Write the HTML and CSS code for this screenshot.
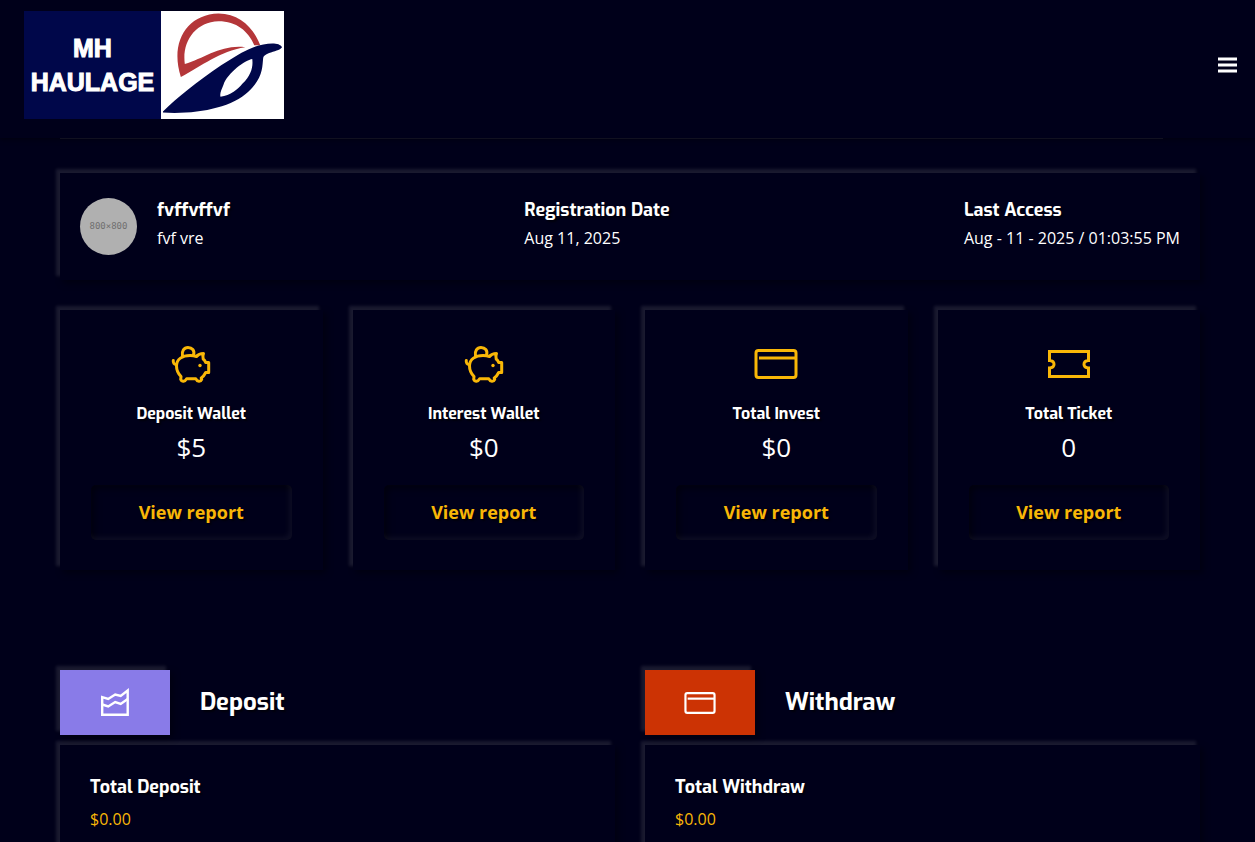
FILE: index.html
```html
<!DOCTYPE html>
<html lang="en">
	<head>
		<meta charset="UTF-8" />
		<meta name="viewport" content="width=device-width, initial-scale=1.0" />
		<title>MH Haulage - Dashboard</title>

		<link rel="stylesheet" href="styles.css">
	</head>

	<body>
		<!-- shared icons -->
		<svg class="sprite" aria-hidden="true">
			<symbol id="piggy" viewBox="-2 -1 44 40">
				<g fill="none" stroke="currentColor" stroke-width="3" stroke-linejoin="round" stroke-linecap="round">
					<path d="M2.300 15.500c-.4 2.500.8 3.800 3 4" />
					<path d="M5.500 21C5.500 14 11.500 10.500 19 10.500c2.500 0 4.500.3 6.500 1 1.500-2 4-3 7-3-.8 2-.8 4-.3 5.500 1.300 1 2 2 2.500 3.500h3v10h-3c-1 2-2 4-4.500 5.500l.5 1.500c-1 2.500-4.500 2.500-6-.8h-9c-1.500 3-5 3.300-6 .8l.3-3C7.500 29 5.500 25 5.500 21z" />
					<path d="M11.500 11C10.500 6 13 2.500 17 2.500S24 5.500 22.500 10" />
				</g>
				<circle cx="29" cy="20.500" r="1.700" fill="currentColor" />
			</symbol>
			<symbol id="card" viewBox="0 0 44 32">
				<g fill="none" stroke="currentColor" stroke-width="3">
					<rect x="2" y="2.500" width="40" height="27" rx="2.500" />
					<path d="M5 10h37" />
				</g>
			</symbol>
			<symbol id="ticket" viewBox="0 0 44 32">
				<path d="M2.500 3.500h39v9c-6 .5-6 7 0 7.500v8.500h-39V20c6-.5 6-7 0-7.500z" fill="none" stroke="currentColor" stroke-width="3" />
			</symbol>
			<symbol id="chart" viewBox="0 0 30 30">
				<g fill="none" stroke="currentColor" stroke-width="2.400">
					<path d="M2.200 9.200l6 1.800 7-4.500 5.500 1.500 7-5.500v24.300H2.200z" />
					<path d="M2.200 16.500l6 2 7-4.500 5.500 2 7-5" />
				</g>
			</symbol>
		</svg>

		<header class="header">
			<a href="#" class="logo">
				<span class="logo-text">MH<br />HAULAGE</span>
				<svg class="logo-mark" viewBox="0 0 124 108" aria-hidden="true">
					<path fill="#b43639" d="M20 66C9 32 25 3 58 2c21 0 35 14 42 32h-6C88 20 76 10 58 10 34 11 21 31 24 53c20-6 37-20 61-17-26 4-44 19-65 30z" />
					<path fill="#00074a" fill-rule="evenodd" d="M2 101C16 87 36 71 61 54c14-9 22-14 30-17 12-5 28-7 31-1-2 3-8 4-13 6-4 2-6 3-6 5-1 9 0 20-15 34-17 16-51 23-86 21zM92 48c-7 1-25 14-29 26-2 5-4 9-3 12 10-1 18-8 22-13 9-9 11-17 10-25z" />
				</svg>
			</a>
			<button type="button" class="menu-btn" aria-label="Menu">
				<svg viewBox="0 0 19 16" aria-hidden="true"><path d="M0 2h19M0 8h19M0 14h19" stroke="currentColor" stroke-width="3" /></svg>
			</button>
		</header>

		<main class="content">
			<section class="panel profile">
				<div class="user">
					<span class="avatar">800×800</span>
					<div>
						<h5>fvffvffvf</h5>
						<p>fvf vre</p>
					</div>
				</div>
				<div>
					<h5>Registration Date</h5>
					<p>Aug 11, 2025</p>
				</div>
				<div>
					<h5>Last Access</h5>
					<p>Aug - 11 - 2025 / 01:03:55 PM</p>
				</div>
			</section>

			<section class="stats">
				<div class="panel stat">
					<svg class="stat-icon"><use href="#piggy" /></svg>
					<h6>Deposit Wallet</h6>
					<p class="amount">$5</p>
					<a href="#" class="btn">View report</a>
				</div>
				<div class="panel stat">
					<svg class="stat-icon"><use href="#piggy" /></svg>
					<h6>Interest Wallet</h6>
					<p class="amount">$0</p>
					<a href="#" class="btn">View report</a>
				</div>
				<div class="panel stat">
					<svg class="stat-icon"><use href="#card" /></svg>
					<h6>Total Invest</h6>
					<p class="amount">$0</p>
					<a href="#" class="btn">View report</a>
				</div>
				<div class="panel stat">
					<svg class="stat-icon"><use href="#ticket" /></svg>
					<h6>Total Ticket</h6>
					<p class="amount">0</p>
					<a href="#" class="btn">View report</a>
				</div>
			</section>

			<section class="reports">
				<div>
					<div class="report-head">
						<span class="panel tile tile-deposit"><svg class="tile-icon"><use href="#chart" /></svg></span>
						<h3>Deposit</h3>
					</div>
					<div class="panel report-body">
						<h5>Total Deposit</h5>
						<p>$0.00</p>
					</div>
				</div>
				<div>
					<div class="report-head">
						<span class="panel tile tile-withdraw"><svg class="tile-icon"><use href="#card" /></svg></span>
						<h3>Withdraw</h3>
					</div>
					<div class="panel report-body">
						<h5>Total Withdraw</h5>
						<p>$0.00</p>
					</div>
				</div>
			</section>
		</main>
	</body>
</html>
```
FILE: styles.css
```css
* {
	box-sizing: border-box;
}

body {
	background-color: #00001a;
	color: #fff;
	font-family: "Open Sans", sans-serif;
	font-size: 16px;
	line-height: 26px;
	margin: 0;
	overflow-x: hidden;
	scrollbar-width: none;
}

h3,
h5,
h6,
p {
	margin: 0;
}

h3,
h5,
h6 {
	font-family: "Exo", "Exo 2", Roboto, sans-serif;
	font-weight: 700;
	text-shadow: 2px 2px 2px rgba(0, 0, 0, 0.6);
}

h3 {
	font-size: 24px;
	line-height: 32px;
	margin-bottom: 2px;
}

h5 {
	font-size: 18px;
	line-height: 24px;
}

h6 {
	font-size: 16px;
	line-height: 20px;
}

a {
	text-decoration: none;
}

.sprite {
	display: none;
}

/* header */
.header {
	align-items: center;
	box-shadow: 0 1px 5px rgba(0, 0, 0, 0.5);
	display: flex;
	justify-content: space-between;
	padding: 11px 18px 19px 24px;
}

.logo {
	background-color: #00074a;
	color: #fff;
	display: flex;
}

.logo-text {
	align-self: center;
	font: 900 25px/34px "Liberation Sans", sans-serif;
	-webkit-text-stroke: 1px #fff;
	text-align: center;
	width: 137px;
}

.logo-mark {
	background-color: #fff;
	height: 108px;
	width: 123px;
}

.menu-btn {
	background: none;
	border: 0;
	color: #fff;
	padding: 0;
}

.menu-btn svg {
	display: block;
	height: 16px;
	width: 19px;
}

/* dashboard */
.content {
	padding: 0 55px 0 60px;
}

.content::before {
	background-color: #111120;
	content: "";
	display: block;
	height: 1px;
	margin-right: 37px;
}

.panel {
	background-color: #00001a;
	box-shadow: -4px -4px 3px rgba(255, 255, 255, 0.1), 3px 3px 7px rgba(0, 0, 0, 0.4);
}

.profile {
	display: flex;
	justify-content: space-between;
	margin-top: 34px;
	padding: 25px 20px;
}

.profile h5 {
	margin-bottom: 3px;
}

.user {
	display: flex;
	gap: 20px;
}

.avatar {
	background-color: #b0b0b0;
	border-radius: 50%;
	color: #6f6f6f;
	font: 9px/57px "DejaVu Sans Mono", monospace;
	height: 57px;
	text-align: center;
	width: 57px;
}

.stats {
	display: grid;
	gap: 30px;
	grid-template-columns: repeat(4, 1fr);
	margin-top: 30px;
}

.stat {
	padding: 34px 31px 30px;
	text-align: center;
}

.stat-icon {
	color: #f9b707;
	display: block;
	height: 40px;
	margin: 0 auto 20px;
	width: 44px;
}

.amount {
	font-size: 26px;
	line-height: 40px;
	margin: 3px 0 18px;
}

.btn {
	border-radius: 5px;
	box-shadow: inset -3px -3px 5px rgba(255, 255, 255, 0.05), inset 3px 3px 7px rgba(0, 0, 0, 0.5);
	color: #f9b707;
	display: block;
	font-size: 18px;
	font-weight: 700;
	line-height: 55px;
	text-shadow: 2px 2px 2px rgba(0, 0, 0, 0.6);
}

.reports {
	display: grid;
	gap: 30px;
	grid-template-columns: 1fr 1fr;
	margin-top: 100px;
}

.report-head {
	align-items: center;
	display: flex;
	gap: 30px;
	margin-bottom: 10px;
}

.tile {
	align-items: center;
	display: flex;
	height: 65px;
	justify-content: center;
	width: 110px;
}

.tile-deposit {
	background-color: #897be8;
}

.tile-withdraw {
	background-color: #cc3304;
}

.tile-icon {
	height: 30px;
	width: 32px;
}

.report-body {
	padding: 30px;
}

.report-body h5 {
	margin-bottom: 7px;
}

.report-body p {
	color: #f9b707;
}
```
